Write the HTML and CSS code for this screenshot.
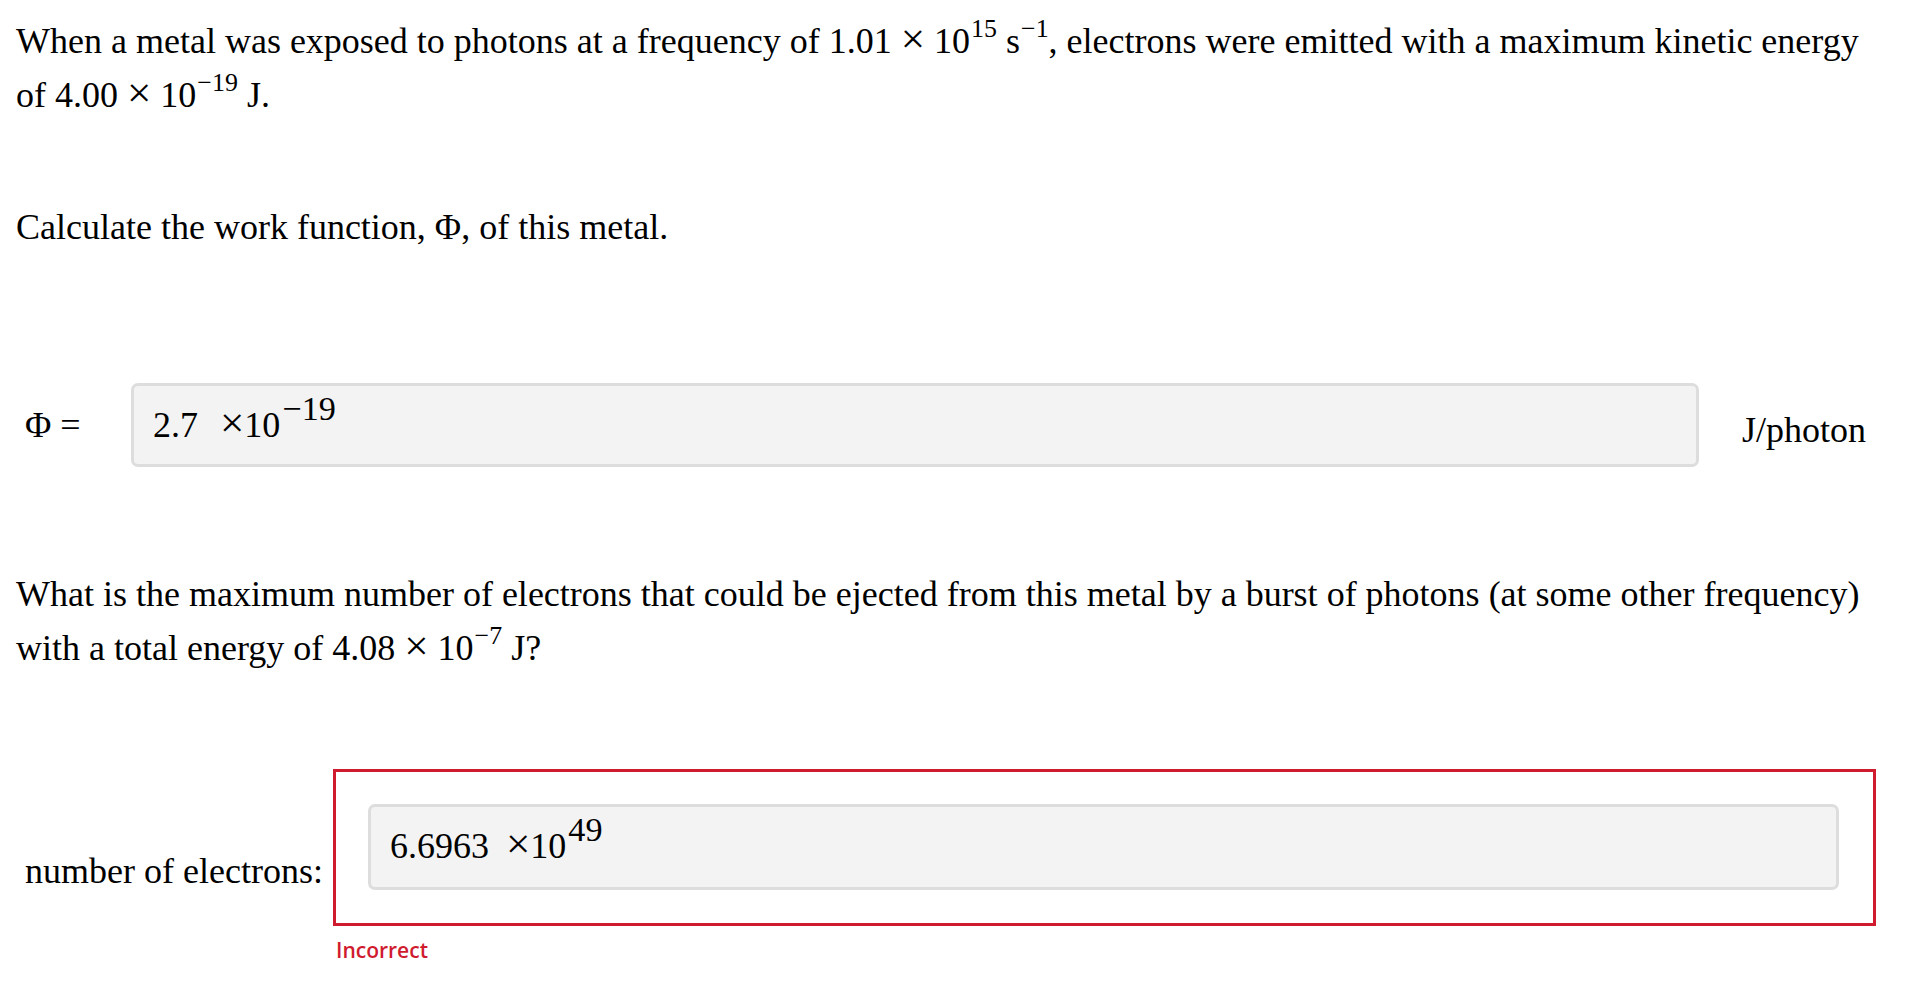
FILE: index.html
```html
<!DOCTYPE html>
<html lang="en">
<head>
<meta charset="utf-8">
<title>Work function</title>
<link rel="stylesheet" href="styles.css">
</head>
<body>
<div class="page">
  <p class="para q1">When a metal was exposed to photons at a frequency of 1.01 <span class="mult">×</span> 10<sup>15</sup> s<sup>−1</sup>, electrons were emitted with a maximum kinetic energy<br>of 4.00 <span class="mult">×</span> 10<sup>−19</sup> J.</p>
  <p class="para calc">Calculate the work function, Φ, of this metal.</p>
  <div class="phi-row">
    <div class="label phi-label">Φ =</div>
    <div class="field phi-field"><span class="num">2.7</span><span class="mult">×</span>10<sup class="exp">−19</sup></div>
    <div class="unit">J/photon</div>
  </div>
  <p class="para q2">What is the maximum number of electrons that could be ejected from this metal by a burst of photons (at some other frequency)<br>with a total energy of 4.08 <span class="mult">×</span> 10<sup>−7</sup> J?</p>
  <div class="answer-row">
    <div class="label elec-label">number of electrons:</div>
    <div class="wrong-box">
      <div class="field"><span class="num num-tight">6.6963</span><span class="mult">×</span>10<sup class="exp">49</sup></div>
    </div>
  </div>
  <div class="feedback">Incorrect</div>
</div>
</body>
</html>
```

FILE: styles.css
```css
html, body {
  margin: 0;
  padding: 0;
  background: #ffffff;
}

.page {
  padding: 14px 30px 20px 16px;
  font-family: "Liberation Serif", "Times New Roman", serif;
  font-size: 36px;
  line-height: 54px;
  color: #000000;
}

.para {
  margin: 0;
}

.para sup {
  font-size: 0.72em;
  line-height: 0;
  vertical-align: 0.6em;
  margin-left: 1px;
}

.mult {
  font-size: 1.2em;
  line-height: 0;
}

.calc {
  margin-top: 78px;
}

.phi-row {
  margin-top: 129px;
  display: flex;
  align-items: center;
}

.label {
  flex: none;
  padding-left: 9px;
  box-sizing: border-box;
}

.phi-label {
  width: 115px;
}

.field {
  flex: 1;
  box-sizing: border-box;
  background: #f3f3f3;
  border: 3px solid #dddddd;
  border-radius: 7px;
  padding: 12px 19px;
  white-space: nowrap;
}

.phi-field {
  height: 84px;
}

.num {
  margin-right: 22px;
}

.num-tight {
  margin-right: 17px;
}

.exp {
  font-size: 0.95em;
  line-height: 0;
  vertical-align: 0.5em;
  margin-left: 2px;
}

.unit {
  flex: none;
  padding: 0 10px 0 43px;
  margin-top: 10px;
}

.q2 {
  margin-top: 100px;
}

.answer-row {
  margin-top: 94px;
  display: flex;
  align-items: flex-end;
}

.elec-label {
  width: 317px;
  margin-bottom: 28px;
}

.wrong-box {
  flex: 1;
  display: flex;
  border: 3px solid #d01b2f;
  padding: 32px 34px 33px 32px;
}

.wrong-box .field {
  height: 86px;
}

.feedback {
  margin-top: 10px;
  padding-left: 320px;
  font-family: "Open Sans", "Liberation Sans", sans-serif;
  font-size: 21px;
  font-weight: 600;
  line-height: 28px;
  color: #d01b2f;
}
```
